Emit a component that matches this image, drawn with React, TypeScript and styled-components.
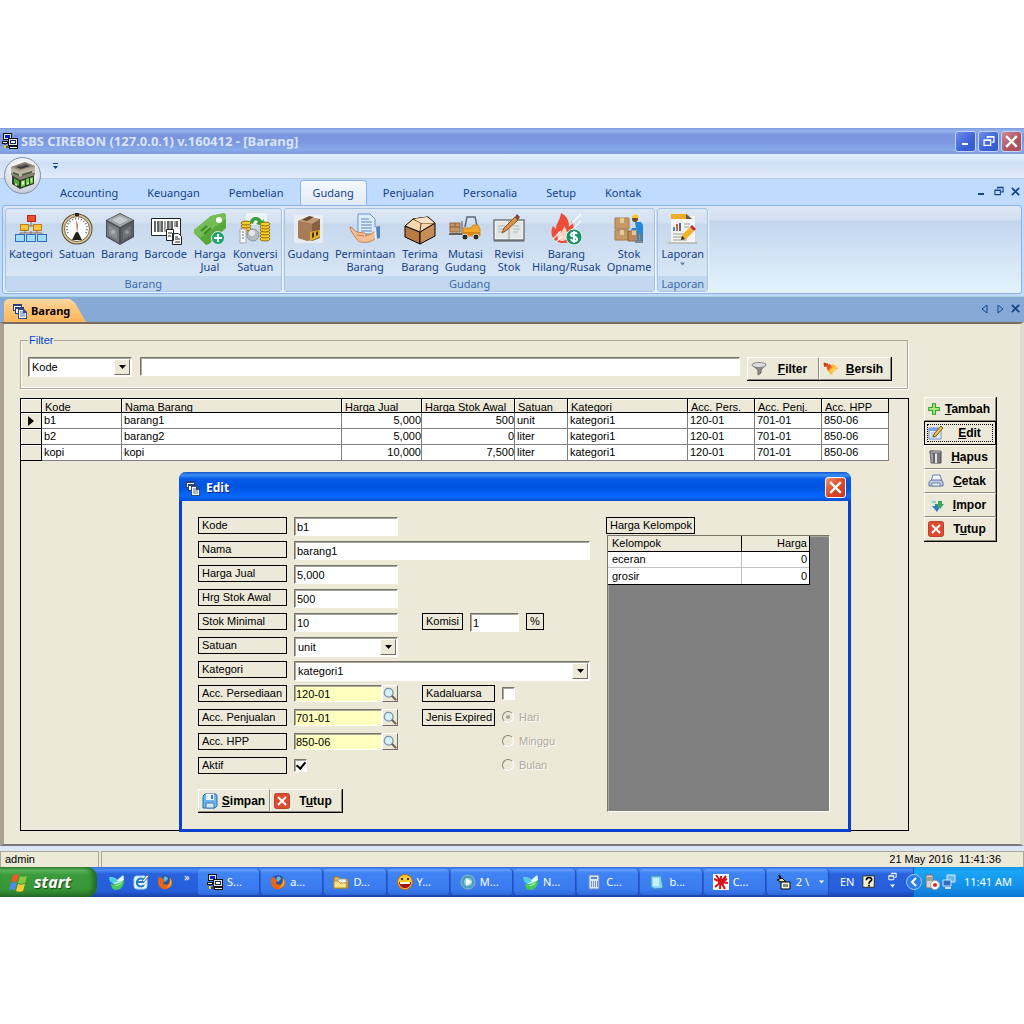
import React from "react";
import styled, { createGlobalStyle } from "styled-components";

const GlobalStyle = createGlobalStyle`
  * { box-sizing: border-box; }
  body { margin: 0; background: #fff; }
  button, input, select { font: inherit; color: inherit; margin: 0; }
  button { padding: 0; border: 0; background: none; }
  svg { display: block; flex: none; }
`;

const uiFont = `"Noto Sans", "Open Sans", sans-serif`;
const formFont = `"Liberation Sans", Arial, sans-serif`;

/* ---------- shell ---------- */

const Screen = styled.main`
  padding: 128px 0;
  min-height: 100vh;
  font: 11px/13px ${formFont};
  color: #000;
`;

const TitleBar = styled.header`
  display: flex;
  align-items: center;
  gap: 2px;
  height: 26px;
  padding: 0 2px;
  background: linear-gradient(#7f9be0, #95b3ee 3px, #7b95df 7px, #7c98e0 14px, #86aae8 22px, #7d95dd);
`;

const AppTitle = styled.h1`
  flex: 1;
  margin: 0;
  padding-left: 1px;
  font: bold 13px/20px ${uiFont};
  color: #d9e5fa;
`;

const WinButton = styled.button<{ $close?: boolean }>`
  display: grid;
  place-items: center;
  width: 21px;
  height: 21px;
  border: 1px solid #c3d2f5;
  border-radius: 3px;
  background: ${(p) =>
    p.$close
      ? "linear-gradient(135deg, #c98a96, #b0565f 60%, #a44c5c)"
      : "linear-gradient(135deg, #6d8fe8, #3c62d8 60%, #3358cf)"};
`;

const QuickBar = styled.div`
  position: relative;
  height: 25px;
  padding: 9px 52px;
  background: linear-gradient(#e3effd, #d9e7fa 6px, #cfdff5 8px, #e0ebfa);
  border-bottom: 1px solid #b4cbea;
`;

const OfficeButton = styled.button`
  position: absolute;
  left: 4px;
  top: 3px;
  z-index: 2;
  display: grid;
  place-items: center;
  width: 37px;
  height: 37px;
  border: 1px solid #8592a8;
  border-radius: 50%;
  background: radial-gradient(circle at 50% 30%, #fff, #dfe3ea 60%, #a9b3c4);
`;

const TabRow = styled.nav`
  display: flex;
  align-items: flex-end;
  gap: 5px;
  height: 26px;
  padding-left: 48px;
  background: #bfdbff;
`;

const RibbonTab = styled.button<{ $active?: boolean }>`
  height: 24px;
  padding: 0 12px;
  border-radius: 3px 3px 0 0;
  font: 11px/24px ${uiFont};
  color: #15428b;
  box-shadow: ${(p) => (p.$active ? "0 0 0 1px #8db2e3" : "none")};
  background: ${(p) => (p.$active ? "linear-gradient(#f5f9ff, #e0eaf7)" : "transparent")};
`;

const MdiButtons = styled.div`
  display: flex;
  align-items: center;
  gap: 7px;
  height: 24px;
  margin-left: auto;
  padding: 0 4px 4px 0;
`;

const RibbonArea = styled.div`
  height: 92px;
  padding: 0 2px 3px;
  background: #bfdbff;
  border-bottom: 1px solid #a9d3dc;
`;

const Ribbon = styled.div`
  display: flex;
  gap: 2px;
  height: 89px;
  padding: 2px 2px 1px;
  border: 1px solid #8db2e3;
  border-radius: 3px;
  background: linear-gradient(#dde7f4, #d3e0f0 14px, #c3d6ed 15px, #e3f3fd);
`;

const Group = styled.section`
  display: flex;
  flex-direction: column;
  border: 1px solid #a6c3e2;
  border-radius: 3px;
  box-shadow: 1px 1px 0 #eef6fd;
  background: linear-gradient(#dde8f5, #d2e0f1 14px, #c7d8ed 15px, #dceaf8);
`;

const GroupItems = styled.div`
  display: flex;
  flex: 1;
`;

const GroupTitle = styled.h2`
  margin: 0;
  height: 15px;
  font: 11px/15px ${uiFont};
  text-align: center;
  color: #3e6aaa;
  background: #c1d8f0;
`;

const RibbonItem = styled.button`
  display: flex;
  flex-direction: column;
  align-items: center;
  min-width: 40px;
  padding: 4px 3px 0;
  font: 11px/13px ${uiFont};
  color: #15428b;
  span { padding-top: 2px; white-space: pre; }
`;

const DocTabs = styled.div`
  display: flex;
  align-items: flex-end;
  height: 25px;
  padding: 0 3px 0 4px;
  background: #87a9d5;
`;

const DocTab = styled.button`
  display: flex;
  align-items: center;
  gap: 3px;
  width: 82px;
  height: 23px;
  padding-left: 8px;
  border-radius: 4px 0 0 0;
  clip-path: polygon(0 3px, 3px 0, 66px 0, 71px 4px, 82px 23px, 0 23px);
  background: linear-gradient(#ffd9a0, #ffc67a 10px, #ffb55c);
  font: bold 11px/20px ${uiFont};
  color: #000;
`;

const DocNav = styled.div`
  display: flex;
  align-items: center;
  gap: 7px;
  height: 23px;
  margin-left: auto;
  padding: 0 1px 4px 0;
`;

const Client = styled.div`
  position: relative;
  display: flex;
  align-items: flex-start;
  gap: 15px;
  padding: 9px 23px 13px 16px;
  border: solid;
  border-width: 2px 4px 2px;
  border-color: #7d6a5e #dedbcf #77797e #a9a193;
  background: #ece9d8;
`;

const Main = styled.div`
  flex: 1;
  min-width: 0;
`;

const FilterBox = styled.fieldset`
  display: flex;
  align-items: flex-start;
  margin: 0 1px 9px 0;
  padding: 10px 15px 7px 7px;
  border: 1px solid #aca899;
  box-shadow: inset 1px -1px 0 #fff, 1px 1px 0 #fff;
  legend { padding: 0 1px; line-height: 14px; color: #0046d5; }
`;

const sunken = `
  border: 1px solid;
  border-color: #777468 #fff #fff #777468;
  box-shadow: inset 1px 1px 0 #a9a69a;
  border-radius: 0;
  outline: none;
`;

const TextBox = styled.input<{ $w?: number; $lookup?: boolean }>`
  ${sunken}
  width: ${(p) => (p.$w ? p.$w + "px" : "auto")};
  flex: ${(p) => (p.$w ? "none" : 1)};
  min-width: 0;
  height: ${(p) => (p.$lookup ? 17 : 19)}px;
  padding: ${(p) => (p.$lookup ? "0 1px" : "1px 2px")};
  background: ${(p) => (p.$lookup ? "#ffffbf" : "#fff")};
`;

const SelectWrap = styled.div<{ $w?: number }>`
  position: relative;
  flex: ${(p) => (p.$w ? "none" : 1)};
  width: ${(p) => (p.$w ? p.$w + "px" : "auto")};
  height: 20px;
`;

const SelectBox = styled.select`
  ${sunken}
  appearance: none;
  width: 100%;
  height: 20px;
  padding: 1px 3px 0;
  background: #fff;
`;

const DropMark = styled.span`
  position: absolute;
  right: 2px;
  top: 2px;
  display: grid;
  place-items: center;
  width: 16px;
  height: 16px;
  border: 1px solid;
  border-color: #fff #716f64 #716f64 #fff;
  background: #ece9d8;
  pointer-events: none;
`;

const SearchField = styled(TextBox)`
  margin: 0 7px 0 8px;
`;

const ButtonGroup = styled.div<{ $stack?: boolean }>`
  display: flex;
  flex-direction: ${(p) => (p.$stack ? "column" : "row")};
  border: solid #000;
  border-width: 0 1px 1px 0;
`;

const ToolButton = styled.button<{ $focused?: boolean }>`
  display: flex;
  align-items: center;
  width: 72px;
  height: ${(p) => (p.$focused !== undefined ? 24 : 23)}px;
  padding-left: 3px;
  border: 1px solid;
  border-color: ${(p) => (p.$focused ? "#000" : "#fff #8d8a7c #8d8a7c #fff")};
  outline: ${(p) => (p.$focused ? "1px dotted #000" : "none")};
  outline-offset: -4px;
  background: #ece9d8;
  font: bold 12px/16px ${formFont};
  span { flex: 1; text-align: center; }
`;

const SideTools = styled.aside`
  padding-top: 64px;
`;

/* ---------- tables ---------- */

const GridPanel = styled.div`
  height: 433px;
  border: 1px solid #000;
`;

const DataGrid = styled.table`
  table-layout: fixed;
  width: 868px;
  border-spacing: 0;
  th, td { padding: 0; border: solid #808080; border-width: 0 1px 1px 0; font-weight: normal; text-align: left; white-space: nowrap; overflow: hidden; }
  th { height: 14px; padding-left: 3px; border-color: #000; box-shadow: inset 1px 1px 0 #fff; }
  th > span { display: block; height: 13px; line-height: 16px; overflow: hidden; }
  td { height: 16px; padding-left: 2px; line-height: 15px; background: #fff; }
  td:first-child { background: #ece9d8; border-color: #000; padding-left: 7px; box-shadow: inset 1px 1px 0 #fff; }
  td.num { text-align: right; }
`;

/* ---------- dialog ---------- */

const Dialog = styled.section`
  position: absolute;
  left: 175px;
  top: 148px;
  width: 672px;
  border: solid #0a3fd0;
  border-width: 0 3px 3px;
  border-radius: 7px 7px 0 0;
  background: #ece9d8;
`;

const DialogTitle = styled.header`
  display: flex;
  align-items: center;
  gap: 5px;
  height: 29px;
  margin: 0 -3px;
  padding: 2px 5px 0 6px;
  border-radius: 7px 7px 0 0;
  background: linear-gradient(#1553c8, #3a8ff5 3px, #0458e6 7px, #0053e1 16px, #0569ff 24px, #0450cf);
  h2 { flex: 1; margin: 0; font: bold 12px/20px ${uiFont}; color: #fff; text-shadow: 1px 1px 0 #0b2a80; }
`;

const DialogClose = styled.button`
  display: grid;
  place-items: center;
  width: 21px;
  height: 21px;
  border: 1px solid #fff;
  border-radius: 3px;
  background: linear-gradient(135deg, #ee8f70, #dd4a26 50%, #c8391a);
`;

const DialogBody = styled.form`
  display: flex;
  gap: 16px;
  padding: 16px 18px 16px 16px;
`;

const Fields = styled.div`
  width: 392px;
`;

const Row = styled.div`
  display: flex;
  align-items: flex-start;
  gap: 7px;
  height: 24px;
`;

const Columns = styled.div`
  display: flex;
  gap: 24px;
`;

const Caption = styled.label<{ $w?: number }>`
  flex: none;
  display: inline-block;
  width: ${(p) => (p.$w ? p.$w + "px" : "auto")};
  height: 17px;
  padding: 0 3px;
  border: 1px solid #000;
  line-height: 15px;
  white-space: nowrap;
`;

const Lookup = styled.div`
  display: flex;
`;

const LookupButton = styled.button`
  display: grid;
  place-items: center;
  width: 16px;
  height: 17px;
  border: 1px solid;
  border-color: #fff #716f64 #716f64 #fff;
  background: #ece9d8;
`;

const CheckBox = styled.input`
  ${sunken}
  appearance: none;
  width: 13px;
  height: 13px;
  margin-top: 2px;
  background: #fff;
  &:checked::after {
    content: "";
    display: block;
    width: 4px;
    height: 7px;
    margin: 0 0 0 3px;
    border: solid #000;
    border-width: 0 2px 2px 0;
    transform: rotate(40deg);
  }
`;

const RadioList = styled.div`
  display: flex;
  flex-direction: column;
`;

const RadioLabel = styled.label`
  display: flex;
  gap: 5px;
  height: 24px;
  line-height: 16px;
  color: #aca899;
  text-shadow: 1px 1px 0 #fff;
`;

const Radio = styled.input`
  appearance: none;
  display: grid;
  place-items: center;
  width: 12px;
  height: 12px;
  margin-top: 2px;
  border: 1px solid;
  border-color: #8a877a #fff #fff #8a877a;
  border-radius: 50%;
  &:checked::after { content: ""; width: 4px; height: 4px; border-radius: 50%; background: #a5a293; }
`;

const DialogActions = styled.div`
  display: flex;
  padding-top: 8px;
`;

const PricePane = styled.div`
  flex: 1;
`;

const PriceWell = styled.div`
  height: 277px;
  margin: 1px 0 0 1px;
  ${sunken}
  background: #808080;
`;

const PriceGrid = styled.table`
  table-layout: fixed;
  width: 201px;
  border-spacing: 0;
  border-right: 1px solid #000;
  border-bottom: 1px solid #000;
  th, td { height: 16px; padding: 0 2px 0 4px; border: solid #c0c0c0; border-width: 0 1px 1px 0; font-weight: normal; line-height: 15px; text-align: left; background: #fff; }
  th { border-color: #000; background: #ece9d8; }
  tbody tr:last-child td { border-bottom: 0; }
  tr > *:last-child { border-right: 0; text-align: right; }
`;

/* ---------- status bar and taskbar ---------- */

const StatusBar = styled.footer`
  display: flex;
  gap: 2px;
  height: 21px;
  border-top: 5px solid #dbe7f4;
  background: #ece9d8;
`;

const StatusCell = styled.div<{ $w?: number }>`
  flex: ${(p) => (p.$w ? "none" : 1)};
  width: ${(p) => (p.$w ? p.$w + "px" : "auto")};
  padding: 0 22px 0 4px;
  border: solid #aca899;
  border-width: 1px 1px 0 1px;
  line-height: 15px;
  text-align: ${(p) => (p.$w ? "left" : "right")};
  white-space: pre;
`;

const Taskbar = styled.footer`
  display: flex;
  height: 30px;
  background: linear-gradient(#3370e0, #4a8af5 3px, #2a62dd 7px, #245edb 24px, #1941a5);
  font: 11px/28px ${uiFont};
  color: #fff;
`;

const StartButton = styled.button`
  display: flex;
  align-items: center;
  gap: 5px;
  width: 97px;
  padding: 0 0 1px 9px;
  border-radius: 0 10px 10px 0;
  background: linear-gradient(#3f8f3f, #5fb85c 3px, #3b9a3b 8px, #379737 22px, #2a6f2a);
  box-shadow: inset -4px 0 5px #1f6a24;
  font: italic bold 16px/22px ${uiFont};
  color: #fff;
  text-shadow: 1px 1px 1px #1c4a1c;
`;

const QuickLaunch = styled.div`
  display: flex;
  align-items: center;
  gap: 8px;
  width: 101px;
  padding-left: 12px;
  span { padding: 0 0 10px 3px; }
`;

const Tasks = styled.div`
  display: flex;
  flex: 1;
  gap: 1px;
  padding: 2px 0 2px 0;
`;

const TaskButton = styled.button`
  display: flex;
  flex: 1;
  align-items: center;
  gap: 4px;
  padding-left: 9px;
  border-radius: 3px;
  background: linear-gradient(#6ba0f8, #3f83f4 4px, #3a7bf0 20px, #2f68d8);
  box-shadow: inset -1px 0 0 #2250bd;
  line-height: 24px;
  white-space: pre;
  svg + svg { margin-left: auto; }
`;

const TaskMenu = styled.span`
  margin: 0 5px 0 auto;
`;

const Lang = styled.div`
  display: flex;
  align-items: center;
  gap: 8px;
  width: 84px;
  padding-left: 11px;
`;

const LangTools = styled.span`
  display: flex;
  flex-direction: column;
  align-items: center;
  gap: 3px;
  padding: 0 0 5px 4px;
`;

const Tray = styled.div`
  position: relative;
  display: flex;
  align-items: center;
  gap: 1px;
  width: 111px;
  padding-left: 10px;
  background: linear-gradient(#1893ea, #1ba6f5 4px, #128fe9 20px, #0f76d3);
  border-left: 1px solid #0f5bb8;
  time { padding-left: 6px; white-space: nowrap; }
`;

const TrayArrow = styled.button`
  position: absolute;
  left: -8px;
  top: 7px;
`;

/* ---------- icons ---------- */

type SvgProps = { s?: number; box?: number; children: React.ReactNode };
const Svg = ({ s = 16, box = 16, children }: SvgProps) => (
  <svg width={s} height={s} viewBox={`0 0 ${box} ${box}`} aria-hidden="true">{children}</svg>
);
const Big = ({ children }: { children: React.ReactNode }) => <Svg s={32} box={32}>{children}</Svg>;

const AppIcon = () => (
  <Svg>
    <path d="M1 0h9v7H1z" fill="#111" /><path d="M2 1h7v5H2z" fill="#e4e4e4" /><path d="M3 2h5v3H3z" fill="#1023b8" />
    <path d="M6 5h10v8H6z" fill="#111" /><path d="M7 6h8v6H7z" fill="#e4e4e4" /><path d="M8 7h6v4H8z" fill="#1b2a5c" /><path d="M9 8h4v2H9z" fill="#fff" />
    <path d="M0 8h6v3H0zM7 13h9v3H7z" fill="#111" /><path d="M1 9h4v1H1zM8 14h7v1H8z" fill="#f4f4f4" />
    <path d="M3 11v3h4" fill="none" stroke="#111" /><path d="M2 12h2v3H2z" fill="#f4d000" />
  </Svg>
);
const FormsIcon = () => (
  <Svg>
    <path d="M1 1h9v7H1z" fill="#2a3f80" /><path d="M2 3h7v4H2z" fill="#fff" />
    <path d="M3 4h9v7H3z" fill="#2a3f80" /><path d="M4 6h7v4H4z" fill="#fff" />
    <path d="M6 6h6l3 3v7H6z" fill="#2f4a86" /><path d="M7 7h4v3h3v5H7z" fill="#fff" /><path d="M8 9h3M8 11h5M8 13h5" stroke="#4f6cae" />
  </Svg>
);
const ShopIcon = () => (
  <Svg s={30} box={30}>
    <path d="M3 6L17 1l10 4v8l-15 4-9-4z" fill="#b0a898" /><path d="M3 6L17 1l10 4-15 4z" fill="#8b8377" />
    <path d="M8 6l9-3 5 2-9 3z" fill="#3d3a36" /><path d="M10 5l7-2 2 1-7 2z" fill="#68635c" />
    <path d="M3 8l9 3 15-4v5l-15 4-9-4z" fill="#beb6a4" /><path d="M5 11l6 2v2l-6-2zM14 13l10-3v2l-10 3z" fill="#4b5a48" />
    <path d="M4 13l8 3 14-4v11l-14 5-8-5z" fill="#2f3d2a" /><path d="M3 12l9 4 15-4v2l-15 5-9-5z" fill="#8c8474" />
    <path d="M6 17l5 3v5l-5-3z" fill="#4faa35" /><path d="M13 20l4-1v6l-4 1zM18 18l3-1v6l-3 1zM22 17l3-1v6l-3 1z" fill="#6fd047" />
    <path d="M14 21l2-1v3l-2 1zM23 18l1-1v3l-1 1z" fill="#e0f9c6" /><path d="M7 22l2 1v2l-2-1zM19 22l2-1v2l-2 1z" fill="#c4efa2" />
  </Svg>
);
const Cross = ({ c = "#fff", s = 11, w = 2 }: { c?: string; s?: number; w?: number }) => (
  <Svg s={s} box={11}><path d="M1 1l9 9M10 1l-9 9" stroke={c} strokeWidth={w} /></Svg>
);
const Minimise = ({ c = "#fff" }) => <Svg s={10} box={10}><path d="M1 8h6" stroke={c} strokeWidth="2" /></Svg>;
const Restore = ({ c = "#fff", s = 11 }: { c?: string; s?: number }) => (
  <Svg s={s} box={11}><path d="M1 4.500h6v5H1zM1 5h6M4 3V1.500h6v5H8M4 2h6" fill="none" stroke={c} strokeWidth="1.200" /></Svg>
);
const Triangle = ({ c = "#000", w = 7 }: { c?: string; w?: number }) => (
  <svg width={w} height={4} viewBox="0 0 7 4" aria-hidden="true"><path d="M0 0h7L3.500 4z" fill={c} /></svg>
);

const KategoriIcon = () => (
  <Big>
    <path d="M16 8v5M10 13h12M10 13v7M22 13v7M5 20h22M5 20v3M16 18v5M27 20v3" stroke="#8a6a5c" fill="none" />
    <rect x="12.500" y="2.500" width="8" height="6" fill="#ee4a2c" stroke="#b02a16" />
    <rect x="5.500" y="11.500" width="8" height="6" fill="#ffc53a" stroke="#c07c12" /><rect x="18.500" y="11.500" width="8" height="6" fill="#ffc53a" stroke="#c07c12" />
    {[0.5, 11.5, 22.5].map((x) => <rect key={x} x={x} y="21.500" width="9" height="7" fill="#9fdcff" stroke="#2f6bc0" />)}
  </Big>
);
const SatuanIcon = () => (
  <Big>
    <circle cx="16" cy="16" r="15.500" fill="#5b4a30" /><circle cx="16" cy="16" r="14.500" fill="#d8c49a" /><circle cx="16" cy="16" r="12.500" fill="#fff" stroke="#776546" />
    <path d="M7 20a10 10 0 1 1 18 0" fill="none" stroke="#777" strokeDasharray="1 2" strokeWidth="2" />
    <path d="M15 7l1 15 1-10z" fill="#c0705a" /><path d="M11 27l3-6h4l3 6z" fill="#262019" /><circle cx="16" cy="21" r="2" fill="#222" />
    <path d="M14 0h4v3h-4z" fill="#2b241a" />
  </Big>
);
const BarangIcon = () => (
  <Big>
    <path d="M16 0l14 7v17l-14 8-14-8V7z" fill="#4a4f53" /><path d="M16 1l13 6-13 7L3 7z" fill="#9fa6a9" />
    <path d="M16 3l8 4-8 4-8-4z" fill="#c3cacc" /><path d="M3 9l12 6v15L3 23z" fill="#747a7e" /><path d="M29 9l-12 6v15l12-7z" fill="#5a5f63" />
    <path d="M5 13l8 4v9l-8-4z" fill="#899094" /><path d="M27 13l-8 4v9l8-4z" fill="#6c7276" /><circle cx="9" cy="19" r="2" fill="#abb2b5" /><circle cx="23" cy="19" r="2" fill="#8f9699" />
  </Big>
);
const BarcodeIcon = () => (
  <Big>
    <path d="M1.500 5.500h29v17h-29z" fill="#fff" stroke="#222" />
    <path d="M5 8v11M8 8v11M12 8v11M18 8v11M22 8v8M27 8v6" stroke="#333" strokeWidth="1.500" /><path d="M10 8v11M15 8v11M20 8v8M25 8v6" stroke="#444" />
    <path d="M16.500 16.500h7v11h-7zM22.500 20.500h6l3 3v8h-9z" fill="#fff" stroke="#222" /><path d="M18 20h4M18 23h3M25 24h3M25 26h5M25 29h5" stroke="#222" />
  </Big>
);
const HargaIcon = () => (
  <Big>
    <path d="M17 3L30 0l2 2v13L15 31l-3 1L0 20v-3z" fill="#58a83c" /><path d="M17 3L30 0l2 2v4L6 25l-6-6v-2z" fill="#73bd54" />
    <circle cx="25" cy="7" r="3" fill="#fff" /><path d="M7 18l6-5M10 21l7-6" stroke="#3d8628" strokeWidth="2" />
    <circle cx="24" cy="25" r="6.500" fill="#20a06c" stroke="#d8eee4" /><path d="M24 21v8M20 25h8" stroke="#fff" strokeWidth="2" />
  </Big>
);
const coins = (x: number, ys: number[]) => ys.map((y) => <ellipse key={y} cx={x} cy={y} rx="5" ry="2" fill="#f3cb2d" stroke="#94700c" />);
const KonversiIcon = () => (
  <Big>
    <path d="M7 0h21v12H7z" fill="#f7faf8" opacity=".7" /><path d="M11 10c0-7 9-8 12-2l2-2-1 7-7-2 2-2c-2-3-4-2-5 2z" fill="#35a13c" />
    {coins(7, [19, 16, 13, 10])}{coins(26, [26, 23, 20, 17, 14, 11])}
    <path d="M1 16h6v14H1z" fill="#f4f6f8" stroke="#a5aab4" /><circle cx="14" cy="22" r="6" fill="#b6bac0" stroke="#8b9098" /><circle cx="13" cy="20" r="3" fill="#e6e9ec" />
    <path d="M3 19h2M3 22h2M3 25h2" stroke="#777" />
  </Big>
);
const GudangIcon = () => (
  <Big>
    <path d="M2 2h29v28H2z" fill="#f8f6f4" opacity=".6" /><path d="M6 8l9-4 13 2v18l-13 4-9-3z" fill="#9c7455" />
    <path d="M6 8l9-4 13 2-8 5z" fill="#c39a76" /><path d="M20 11l8-5v19l-8 3z" fill="#8b6040" /><path d="M6 8l14 3v17L6 25z" fill="#a67c5b" />
    <path d="M17 3l-7 4 5 1 7-4z" fill="#6c4a31" /><path d="M18 19l10-2v7l-10 4z" fill="#e0b125" /><path d="M20 20l2-1v5l-2 1zM24 19l2-1v4l-2 1z" fill="#4a2d10" />
  </Big>
);
const PermintaanIcon = () => (
  <Big>
    <path d="M9 1h12l5 5v15H9z" fill="#dcecfb" stroke="#6c94c9" /><path d="M12 6h8M12 9h11M12 12h11M12 15h11M12 18h11" stroke="#5c83bb" />
    <path d="M1 14c3 0 4 4 7 5l7 1c2 0 3 2 1 3l6-2 4-3 1 7c-5 4-9 5-15 4-4 0-5-5-8-8-1-2-3-4-3-7z" fill="#f4bf95" stroke="#c07f55" />
    <path d="M8 22l7 1" stroke="#c07f55" /><path d="M26 14l5-1v12l-4 1z" fill="#4f82c4" /><path d="M25 15l2-1 1 12-2 1z" fill="#e8eff8" />
  </Big>
);
const TerimaIcon = () => (
  <Big>
    <path d="M1 13l15 6v12L1 24z" fill="#b97a40" stroke="#000" /><path d="M16 19l15-9v13l-15 8z" fill="#c88d55" stroke="#000" />
    <path d="M1 13L9 6l15-2 7 6-15 9z" fill="#f6d6ab" stroke="#000" /><path d="M9 6l8 4-1 9M17 10l14 0M9 6l15-2" fill="none" stroke="#5b3a17" />
    <path d="M10 6l13-2 7 6-13 0z" fill="#fbe4c4" />
  </Big>
);
const MutasiIcon = () => (
  <Big>
    <path d="M1 10h10v9H1z" fill="#c39468" stroke="#966643" /><path d="M1 14h10M6 10v4" stroke="#8d5c38" />
    <path d="M0 21h13" stroke="#6d6053" strokeWidth="2" /><path d="M13 8v14" stroke="#4d5560" /><path d="M16 14l2-10h8l3 13" fill="none" stroke="#5a6a80" strokeWidth="1.500" />
    <path d="M14 15h8l2-3h5l2 4v7H14z" fill="#f2a729" stroke="#c98a2a" /><path d="M14 19h17v3H14z" fill="#d98516" />
    <circle cx="16" cy="24" r="3" fill="#2b2b2b" stroke="#ddd" /><circle cx="27" cy="24" r="3" fill="#2b2b2b" stroke="#ddd" />
  </Big>
);
const RevisiIcon = () => (
  <Big>
    <path d="M1 7h30v20H1z" fill="#f3f4f4" stroke="#74797c" strokeWidth="1.500" /><path d="M3 9h12v16H3zM17 9h12v16H17z" fill="#e2e6e4" />
    <path d="M16 7v20" stroke="#8c9195" /><path d="M1 28h30" stroke="#4d5154" /><path d="M5 13h7M5 16h6M5 19h7M20 13h6M20 16h7M20 19h5" stroke="#b2b7ba" />
    <path d="M22 4l3 3-11 10-5 3 2-5z" fill="#dd9448" stroke="#8a5521" /><path d="M22 4l2-3 3 3-2 3z" fill="#7c4a3c" />
  </Big>
);
const HilangIcon = () => (
  <Big>
    <path d="M14 30C3 30-1 21 3 13l3 3c0-6 4-8 5-16 6 3 8 8 8 13l3-5c4 9 3 22-8 22z" fill="#ee4c36" />
    <path d="M12 28c-5 0-6-6-3-10l2 2c1-3 3-4 3-7 4 5 6 15-2 15z" fill="#ffd2c4" /><path d="M19 13L31 1M22 17l9-9M3 26l8-8M6 29l6-6" stroke="#fff" strokeWidth="1.500" opacity=".8" />
    <circle cx="24" cy="24" r="8" fill="#17956a" stroke="#e6f5ef" /><path d="M27 21c-1-2-6-2-6 1 0 2 6 1 6 4 0 3-5 3-6 0M24 18v12" fill="none" stroke="#fff" strokeWidth="2" />
  </Big>
);
const StokIcon = () => (
  <Big>
    <path d="M2 5h14v11H2zM2 17h13v10H2z" fill="#c39a66" stroke="#a47a48" /><path d="M15 18h12l1 10H15z" fill="#b9895a" stroke="#94693c" />
    <path d="M7 5v5h4V5M7 17v5h4v-5M19 18v4h4v-4" fill="#e4c698" /><circle cx="22" cy="6" r="3" fill="#6a4a2e" /><path d="M19 5a3.500 3.500 0 0 1 7 0z" fill="#f6cb25" />
    <path d="M22 9h6l2 3v17h-2v-8l-2-1v9h-2V17l-6 0 1-2 4 0z" fill="#2489d8" /><path d="M22 28h8v2h-8z" fill="#7d8794" />
  </Big>
);
const LaporanIcon = () => (
  <Big>
    <path d="M4 3h24v27H4z" fill="#f4f4f2" /><path d="M1 30h29" stroke="#b9b2a9" strokeWidth="1.500" /><path d="M4 1h16l5 5H4z" fill="#f0ac26" /><path d="M19 1l6 5h-6z" fill="#5a5a5a" />
    <path d="M7 14v4" stroke="#3d8fc2" strokeWidth="2" /><path d="M10 11v7" stroke="#e05a3c" strokeWidth="2" /><path d="M13 10v8" stroke="#56688f" strokeWidth="2" /><path d="M17 11h6M17 14h5M6 21h10M6 24h9M6 27h14" stroke="#9b9b9b" />
    <path d="M23 14l4 4-8 8-5 1 1-5z" fill="#f2b22c" /><path d="M23 14l2-2 4 4-2 2z" fill="#b62a38" /><path d="M15 23l3 3-4 1z" fill="#222" />
  </Big>
);

const FunnelIcon = () => (
  <Svg><path d="M1 4l6 5v5l3-2V9l5-6z" fill="#8c8c8c" stroke="#6a6a6a" /><ellipse cx="8" cy="4" rx="7" ry="2.500" fill="#dedede" stroke="#888" /></Svg>
);
const BroomIcon = () => (
  <Svg><path d="M1 2l3 3M1 5l4-2" stroke="#c2371a" strokeWidth="2" /><path d="M3 7l7-4 5 4-7 7z" fill="#f9b835" /><path d="M3 4l4-1 2 3-4 4z" fill="#e4582c" /><path d="M8 10l5-4M9 12l4-4" stroke="#ffe48f" /></Svg>
);
const PlusIcon = () => (
  <Svg s={12}><path d="M6 1h4v5h5v4h-5v5H6v-5H1V6h5z" fill="#a8ec83" stroke="#3c9c30" strokeWidth="1.500" /></Svg>
);
const EditIcon = () => (
  <Svg><path d="M1 3h12v11H1z" fill="#eaf2ff" stroke="#6e8fca" /><path d="M1 3h12v3H1z" fill="#79a3ea" /><path d="M3 8h6M3 10h6M3 12h6" stroke="#9fb6dc" /><path d="M13 1l2 2-7 8-3 1 1-3z" fill="#f2c14c" stroke="#7b5a1a" /></Svg>
);
const BinIcon = () => (
  <Svg><path d="M2 2h4v12H3z" fill="#a2a2a2" stroke="#6b6b6b" /><path d="M6 3h7v11H6z" fill="#777" stroke="#4b4b4b" /><path d="M8 4v10" stroke="#e6e6e6" strokeWidth="2" /><path d="M2 2h11v2H2z" fill="#c4c4c4" stroke="#666" /></Svg>
);
const PrinterIcon = () => (
  <Svg><path d="M5 2h7l2 6H3z" fill="#f4f9ff" stroke="#6780a5" /><path d="M1 9l2-2h10l2 2v4H1z" fill="#b9cbe6" stroke="#5f7699" /><path d="M4 10h8v3H4z" fill="#e9f0fa" stroke="#7188aa" /></Svg>
);
const ImportIcon = () => (
  <Svg><path d="M2 2h7v5H2z" fill="#dce9e4" /><path d="M4 4h4v2H4z" fill="#9cc8b8" /><path d="M4 9l5 6 3-5h-2V7H7v2z" fill="#2b7fc4" /><path d="M10 4h4v3h2l-4 5-4-5h2z" fill="#3da757" /></Svg>
);
const CloseIcon = () => (
  <Svg><rect x=".5" y=".5" width="15" height="15" rx="2" fill="#dd4b30" stroke="#b8442e" /><path d="M4 4l8 8M12 4l-8 8" stroke="#fff" strokeWidth="2" /></Svg>
);
const SaveIcon = () => (
  <Svg><path d="M1 3l2-2h11l1 2v10l-2 2H1z" fill="#6fb4ea" stroke="#2f6fb4" /><path d="M4 1h8v6H4z" fill="#eaf5ff" /><path d="M4 10h8v5H4z" fill="#d4e8fa" stroke="#3e7dbd" /><path d="M9 2h2v4H9z" fill="#3d7cc0" /></Svg>
);
const LensIcon = () => (
  <Svg s={14}><circle cx="6.500" cy="6.500" r="5" fill="#d9effb" stroke="#7593ab" strokeWidth="1.500" /><path d="M10 10l5 5" stroke="#76694f" strokeWidth="2.500" /></Svg>
);
const WindowsIcon = () => (
  <Svg s={20} box={20}>
    <path d="M4 3c2-1 4-1 6 0L8 10c-2-1-4-1-6 0z" fill="#ee5a2a" /><path d="M11 4c2 1 4 1 7 0l-2 7c-2 1-5 1-7 0z" fill="#86c83c" />
    <path d="M2 11c2-1 4-1 6 0l-2 7c-2-1-4-1-6 0z" fill="#4f8bea" /><path d="M9 12c2 1 4 1 7 0l-2 7c-2 1-5 1-7 0z" fill="#f8cb33" />
  </Svg>
);
const NetIcon = () => (
  <Svg>
    <path d="M1 3l5 1 2 2 6-5 1 5-5 4H5L1 7z" fill="#c9f6f2" /><path d="M0 3l6 1 3 4-5 1C1 8 0 6 0 3z" fill="#49cfe6" />
    <path d="M9 6l6-4-2 6z" fill="#eafffb" /><path d="M2 10c5 1 8-1 13-4 0 6-3 10-8 10-3 0-5-3-5-6z" fill="#46c95a" /><path d="M4 11c4 1 6-1 9-3-1 3-5 5-9 3z" fill="#c5f5c2" />
  </Svg>
);
const BrowserIcon = () => (
  <Svg><rect x="1" y="2" width="13" height="13" rx="3" fill="#eaf6fd" stroke="#a9d4ef" /><path d="M11 6a4 4 0 1 0 0 5M4 8h7" fill="none" stroke="#1f7ac0" strokeWidth="2" /><path d="M9 7l5-6 2 1-5 6z" fill="#fff" stroke="#3a6c9c" /></Svg>
);
const FoxIcon = () => (
  <Svg><circle cx="8" cy="8" r="7" fill="#2a55a5" /><path d="M7 3c2-1 4 0 4 2L8 8 6 7z" fill="#5cbbe8" /><path d="M2 3c1 1 2 1 3 0 0 2 1 3 3 3L6 8c0 3 4 4 6 1 1-2 1-4 0-6 4 3 4 9 0 11-5 3-11 0-11-6 0-2 0-3 1-5z" fill="#e8661b" /><path d="M13 4c3 4 1 9-4 10 3-2 5-5 4-10z" fill="#fbc02f" /></Svg>
);
const FolderIcon = () => (
  <Svg><path d="M1 3h5l1 2h8v9H1z" fill="#e9b949" stroke="#a97817" /><path d="M5 5h8v6H5z" fill="#fff" stroke="#7aa4c8" /><path d="M1 7h4l2 2h7l-1 5H1z" fill="#fbe38e" stroke="#b98b24" /></Svg>
);
const SmileIcon = () => (
  <Svg><circle cx="8" cy="8" r="7.500" fill="#ffc928" stroke="#c3641a" /><path d="M2 8h12c0 8-12 8-12 0z" fill="#a3161b" /><path d="M3 8h10v2H3z" fill="#fff" /><circle cx="5" cy="5" r="1" /><circle cx="11" cy="5" r="1" /></Svg>
);
const PlayIcon = () => (
  <Svg><circle cx="8" cy="8" r="7" fill="#4c9cc4" stroke="#86c0b8" /><circle cx="8" cy="8" r="4" fill="#8fd0dd" /><path d="M6 4l6 4-6 4z" fill="#f3fcff" /></Svg>
);
const CalcIcon = () => (
  <Svg><path d="M3 1h10v14H3z" fill="#d9e6f5" stroke="#6f8db9" /><path d="M5 3h6v2H5z" fill="#5f86b8" /><path d="M5 8h7M5 10h7M5 12h7" stroke="#5a78a6" strokeDasharray="1 1" strokeWidth="1.500" /></Svg>
);
const NoteIcon = () => (
  <Svg><path d="M2 2h10l2 12-8 1-4-2z" fill="#8ad6ee" stroke="#3a8fb8" /><path d="M4 4h6v8H4z" fill="#c6f0fa" /></Svg>
);
const SplatIcon = () => (
  <Svg><path d="M0 0h16v16H0z" fill="#fff" /><path d="M8 8L3 1M8 8l5-6M8 8L1 5M8 8l7 1M8 8l-6 5M8 8l4 7M8 2l-1 13M8 8l6-3" stroke="#d9121a" strokeWidth="2" /><circle cx="8" cy="8" r="3" fill="#d9121a" /></Svg>
);
const ToolsIcon = () => (
  <Svg><path d="M3 1l2 4" stroke="#000" strokeWidth="2" /><path d="M1 6l5-2 4 4H5z" fill="#e8d9a8" stroke="#000" /><path d="M5 8h9v7H5z" fill="#f2f2e8" stroke="#000" /><path d="M7 10h5v3H7z" fill="#8a8a6a" /></Svg>
);
const HelpIcon = () => (
  <Svg s={14}><path d="M1 1h13v13H1z" fill="#f7f3cf" stroke="#222" /><path d="M5 6c0-4 6-4 6-1 0 2-3 2-3 5M8 11v2" fill="none" stroke="#000" strokeWidth="2" /></Svg>
);
const ServerIcon = () => (
  <Svg><path d="M2 1h7v13H2z" fill="#d5d5cf" stroke="#6f6f6a" /><path d="M3 4h5M3 6h5" stroke="#666" /><circle cx="11" cy="11" r="4.500" fill="#fff" stroke="#aaa" /><circle cx="11" cy="11" r="2" fill="#e22" /></Svg>
);
const ScreensIcon = () => (
  <Svg><path d="M6 1h8v7H6z" fill="#6cb9f2" stroke="#d9ecfa" /><path d="M2 6h8v6H2z" fill="#2c6fc4" stroke="#d0e3f4" /><path d="M4 14h6" stroke="#d8d8d8" strokeWidth="2" /></Svg>
);

/* ---------- content ---------- */

const tabs = ["Accounting", "Keuangan", "Pembelian", "Gudang", "Penjualan", "Personalia", "Setup", "Kontak"];

const groups: { title: string; items: [string, React.FC][] }[] = [
  {
    title: "Barang",
    items: [["Kategori", KategoriIcon], ["Satuan", SatuanIcon], ["Barang", BarangIcon], ["Barcode", BarcodeIcon], ["Harga\nJual", HargaIcon], ["Konversi\nSatuan", KonversiIcon]],
  },
  {
    title: "Gudang",
    items: [["Gudang", GudangIcon], ["Permintaan\nBarang", PermintaanIcon], ["Terima\nBarang", TerimaIcon], ["Mutasi\nGudang", MutasiIcon], ["Revisi\nStok", RevisiIcon], ["Barang\nHilang/Rusak", HilangIcon], ["Stok\nOpname", StokIcon]],
  },
];

const columns: [string, number][] = [
  ["", 21], ["Kode", 80], ["Nama Barang", 220], ["Harga Jual", 80], ["Harga Stok Awal", 93], ["Satuan", 53],
  ["Kategori", 120], ["Acc. Pers.", 67], ["Acc. Penj.", 67], ["Acc. HPP", 67],
];
const rows = [
  ["b1", "barang1", "5,000", "500", "unit", "kategori1", "120-01", "701-01", "850-06"],
  ["b2", "barang2", "5,000", "0", "liter", "kategori1", "120-01", "701-01", "850-06"],
  ["kopi", "kopi", "10,000", "7,500", "liter", "kategori1", "120-01", "701-01", "850-06"],
];

const sideTools: [string, number, React.FC][] = [
  ["Tambah", 0, PlusIcon], ["Edit", 0, EditIcon], ["Hapus", 0, BinIcon], ["Cetak", 0, PrinterIcon], ["Impor", 0, ImportIcon], ["Tutup", 1, CloseIcon],
];

const tasks: [string, React.FC][] = [
  ["S...", AppIcon], ["a...", FoxIcon], ["D...", FolderIcon], ["Y...", SmileIcon], ["M...", PlayIcon],
  ["N...", NetIcon], ["C...", CalcIcon], ["b...", NoteIcon], ["C...", SplatIcon],
];

const Mnemonic = ({ text, at = 0 }: { text: string; at?: number }) => (
  <span>{text.slice(0, at)}<u>{text[at]}</u>{text.slice(at + 1)}</span>
);

const Select = ({ id, value, w, label }: { id: string; value: string; w?: number; label?: string }) => (
  <SelectWrap $w={w}>
    <SelectBox id={id} aria-label={label}><option>{value}</option></SelectBox>
    <DropMark><Triangle /></DropMark>
  </SelectWrap>
);

const TextRow = ({ id, label, value, w }: { id: string; label: string; value: string; w?: number }) => (
  <Row>
    <Caption $w={89} htmlFor={id}>{label}</Caption>
    <TextBox id={id} $w={w} defaultValue={value} />
  </Row>
);

const LookupRow = ({ id, label, value }: { id: string; label: string; value: string }) => (
  <Row>
    <Caption $w={89} htmlFor={id}>{label}</Caption>
    <Lookup>
      <TextBox id={id} $w={88} $lookup defaultValue={value} />
      <LookupButton type="button" aria-label={"Cari " + label}><LensIcon /></LookupButton>
    </Lookup>
  </Row>
);

const EditDialog = () => (
  <Dialog role="dialog" aria-labelledby="edit-title">
    <DialogTitle>
      <FormsIcon />
      <h2 id="edit-title">Edit</h2>
      <DialogClose type="button" aria-label="Tutup"><Cross s={13} /></DialogClose>
    </DialogTitle>
    <DialogBody>
      <Fields>
        <TextRow id="kode" label="Kode" value="b1" w={104} />
        <TextRow id="nama" label="Nama" value="barang1" />
        <TextRow id="harga" label="Harga Jual" value="5,000" w={104} />
        <TextRow id="hrgstok" label="Hrg Stok Awal" value="500" w={104} />
        <Columns>
          <TextRow id="minimal" label="Stok Minimal" value="10" w={104} />
          <Row>
            <Caption htmlFor="komisi">Komisi</Caption>
            <TextBox id="komisi" $w={49} defaultValue="1" />
            <Caption as="span">%</Caption>
          </Row>
        </Columns>
        <Row>
          <Caption $w={89} htmlFor="satuan">Satuan</Caption>
          <Select id="satuan" value="unit" w={104} />
        </Row>
        <Row>
          <Caption $w={89} htmlFor="kategori">Kategori</Caption>
          <Select id="kategori" value="kategori1" />
        </Row>
        <Columns>
          <div>
            <LookupRow id="persediaan" label="Acc. Persediaan" value="120-01" />
            <LookupRow id="penjualan" label="Acc. Penjualan" value="701-01" />
            <LookupRow id="hpp" label="Acc. HPP" value="850-06" />
            <Row>
              <Caption $w={89} htmlFor="aktif">Aktif</Caption>
              <CheckBox id="aktif" type="checkbox" defaultChecked />
            </Row>
          </div>
          <div>
            <Row>
              <Caption $w={73} htmlFor="kadaluarsa">Kadaluarsa</Caption>
              <CheckBox id="kadaluarsa" type="checkbox" />
            </Row>
            <Row>
              <Caption as="span" $w={73}>Jenis Expired</Caption>
              <RadioList role="radiogroup" aria-label="Jenis Expired">
                {["Hari", "Minggu", "Bulan"].map((name, i) => (
                  <RadioLabel key={name}>
                    <Radio type="radio" name="expired" disabled defaultChecked={i === 0} />{name}
                  </RadioLabel>
                ))}
              </RadioList>
            </Row>
          </div>
        </Columns>
        <DialogActions>
          <ButtonGroup>
            <ToolButton type="button"><SaveIcon /><Mnemonic text="Simpan" /></ToolButton>
            <ToolButton type="button"><CloseIcon /><Mnemonic text="Tutup" at={1} /></ToolButton>
          </ButtonGroup>
        </DialogActions>
      </Fields>
      <PricePane>
        <Caption as="span" $w={89}>Harga Kelompok</Caption>
        <PriceWell>
          <PriceGrid>
            <colgroup><col width={134} /><col width={67} /></colgroup>
            <thead><tr><th>Kelompok</th><th>Harga</th></tr></thead>
            <tbody>
              <tr><td>eceran</td><td>0</td></tr>
              <tr><td>grosir</td><td>0</td></tr>
            </tbody>
          </PriceGrid>
        </PriceWell>
      </PricePane>
    </DialogBody>
  </Dialog>
);

export default function App() {
  return (
    <Screen>
      <GlobalStyle />
      <TitleBar>
        <AppIcon />
        <AppTitle>SBS CIREBON (127.0.0.1) v.160412 - [Barang]</AppTitle>
        <WinButton aria-label="Minimize"><Minimise /></WinButton>
        <WinButton aria-label="Restore"><Restore s={12} /></WinButton>
        <WinButton aria-label="Close" $close><Cross s={13} /></WinButton>
      </TitleBar>
      <QuickBar>
        <OfficeButton aria-label="Menu"><ShopIcon /></OfficeButton>
        <svg width="7" height="7" viewBox="0 0 7 7" aria-hidden="true"><path d="M1 0h5v1H1zM1 3h5L3.500 6z" fill="#15428b" /></svg>
      </QuickBar>
      <TabRow>
        {tabs.map((t) => <RibbonTab key={t} $active={t === "Gudang"}>{t}</RibbonTab>)}
        <MdiButtons>
          <button aria-label="Minimize window"><Minimise c="#15428b" /></button>
          <button aria-label="Restore window"><Restore c="#15428b" s={10} /></button>
          <button aria-label="Close window"><Cross c="#15428b" s={9} /></button>
        </MdiButtons>
      </TabRow>
      <RibbonArea>
        <Ribbon>
          {groups.map((g) => (
            <Group key={g.title}>
              <GroupItems>
                {g.items.map(([label, Icon]) => (
                  <RibbonItem key={label}><Icon /><span>{label}</span></RibbonItem>
                ))}
              </GroupItems>
              <GroupTitle>{g.title}</GroupTitle>
            </Group>
          ))}
          <Group>
            <GroupItems>
              <RibbonItem><LaporanIcon /><span>Laporan</span><span><Triangle c="#5c7fae" w={5} /></span></RibbonItem>
            </GroupItems>
            <GroupTitle>Laporan</GroupTitle>
          </Group>
        </Ribbon>
      </RibbonArea>
      <DocTabs>
        <DocTab><FormsIcon />Barang</DocTab>
        <DocNav>
          <button aria-label="Previous"><Svg s={8} box={8}><path d="M6 0v8L1 4z" fill="none" stroke="#15428b" /></Svg></button>
          <button aria-label="Next"><Svg s={8} box={8}><path d="M2 0v8l5-4z" fill="none" stroke="#15428b" /></Svg></button>
          <button aria-label="Close tab"><Cross c="#15428b" s={9} /></button>
        </DocNav>
      </DocTabs>
      <Client>
        <Main>
          <FilterBox>
            <legend>Filter</legend>
            <Select id="filter-by" value="Kode" w={104} label="Filter" />
            <SearchField aria-label="Cari" />
            <ButtonGroup>
              <ToolButton><FunnelIcon /><Mnemonic text="Filter" /></ToolButton>
              <ToolButton><BroomIcon /><Mnemonic text="Bersih" /></ToolButton>
            </ButtonGroup>
          </FilterBox>
          <GridPanel>
            <DataGrid>
              <colgroup>{columns.map(([n, w]) => <col key={n} width={w} />)}</colgroup>
              <thead><tr>{columns.map(([n]) => <th key={n}><span>{n}</span></th>)}</tr></thead>
              <tbody>
                {rows.map((r, i) => (
                  <tr key={r[0]}>
                    <td>{i === 0 && <svg width="6" height="10" viewBox="0 0 6 10" aria-label="Current row"><path d="M0 0l6 5-6 5z" /></svg>}</td>
                    {r.map((v, c) => <td key={c} className={c === 2 || c === 3 ? "num" : undefined}>{v}</td>)}
                  </tr>
                ))}
              </tbody>
            </DataGrid>
          </GridPanel>
        </Main>
        <SideTools>
          <ButtonGroup $stack>
            {sideTools.map(([t, at, Icon]) => (
              <ToolButton key={t} $focused={t === "Edit"}><Icon /><Mnemonic text={t} at={at} /></ToolButton>
            ))}
          </ButtonGroup>
        </SideTools>
        <EditDialog />
      </Client>
      <StatusBar>
        <StatusCell $w={99}>admin</StatusCell>
        <StatusCell>21 May 2016  11:41:36</StatusCell>
      </StatusBar>
      <Taskbar>
        <StartButton><WindowsIcon />start</StartButton>
        <QuickLaunch><NetIcon /><BrowserIcon /><FoxIcon /><span>»</span></QuickLaunch>
        <Tasks>
          {tasks.map(([t, Icon], i) => <TaskButton key={i}><Icon />{t}</TaskButton>)}
          <TaskButton><ToolsIcon />{"2 \\"}<TaskMenu><Triangle c="#fff" w={5} /></TaskMenu></TaskButton>
        </Tasks>
        <Lang><span>EN</span><HelpIcon /><LangTools><Restore s={9} /><Triangle c="#fff" w={5} /></LangTools></Lang>
        <Tray>
          <TrayArrow aria-label="Show hidden icons">
            <Svg><circle cx="8" cy="8" r="7.500" fill="#2b7de8" stroke="#9cc8fa" /><path d="M10 4L6 8l4 4" fill="none" stroke="#fff" strokeWidth="2" /></Svg>
          </TrayArrow>
          <ServerIcon /><ScreensIcon /><time>11:41 AM</time>
        </Tray>
      </Taskbar>
    </Screen>
  );
}
